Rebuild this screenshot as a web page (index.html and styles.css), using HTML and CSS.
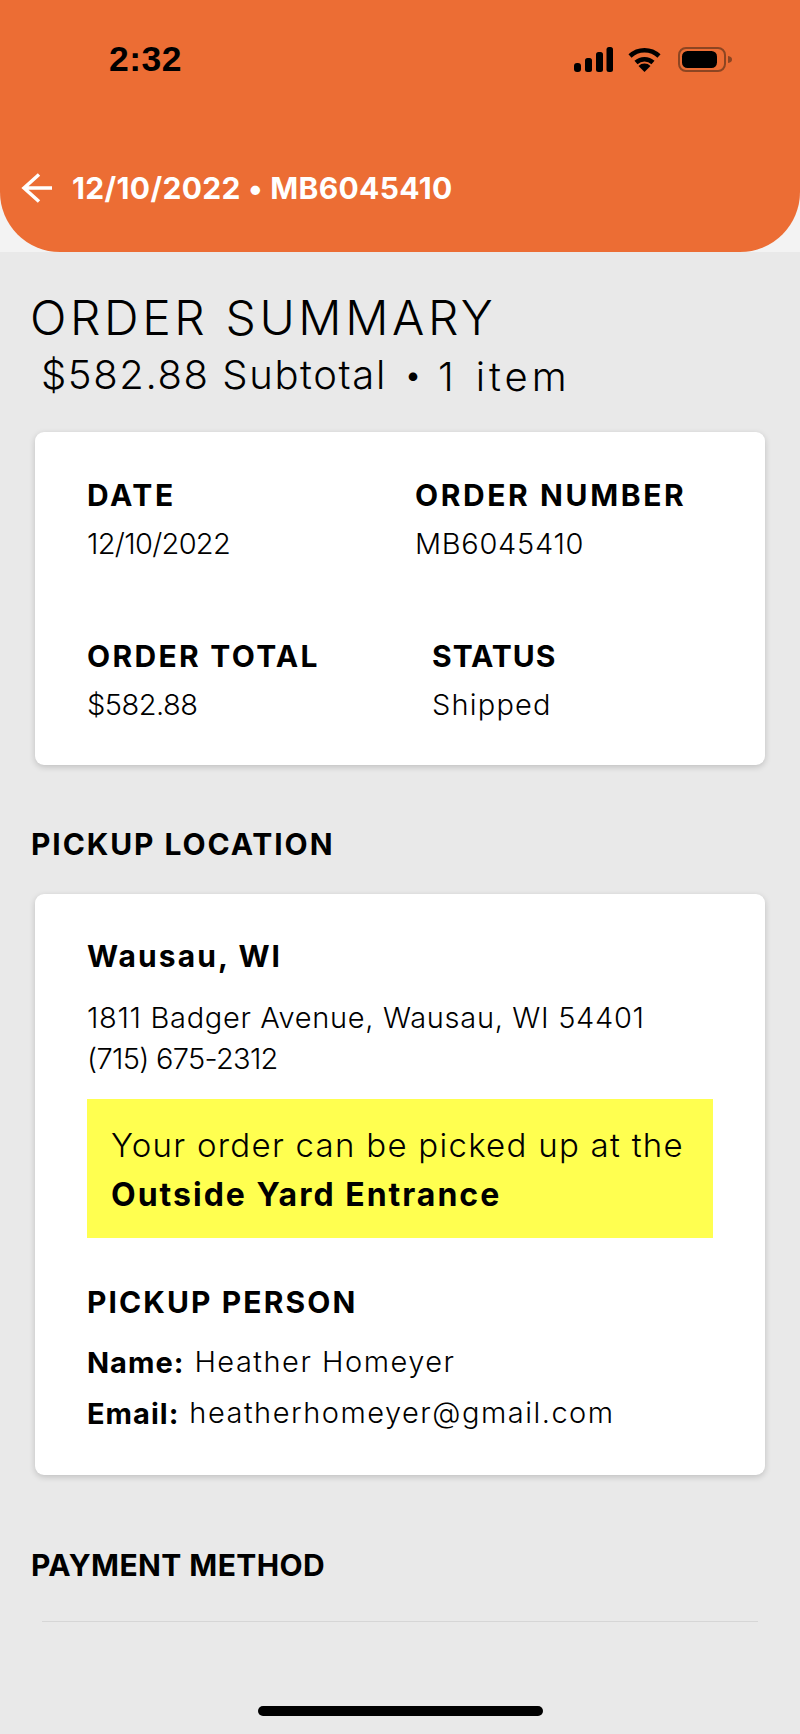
FILE: index.html
```html
<!DOCTYPE html>
<html lang="en">
<head>
<meta charset="utf-8">
<title>Order Summary</title>
<link rel="stylesheet" href="styles.css">
</head>
<body>
<header class="header">
  <div class="status">
    <span class="time">2:32</span>
    <div class="status-icons">
      <svg class="signal" width="40" height="25" viewBox="0 0 40 25" aria-hidden="true">
        <rect x="1" y="16" width="7" height="9" rx="3"/>
        <rect x="12" y="11" width="7" height="14" rx="2.5"/>
        <rect x="23" y="5" width="7" height="20" rx="2.5"/>
        <rect x="33.500" y="0" width="6.500" height="25" rx="2.500"/>
      </svg>
      <svg class="wifi" width="33" height="25" viewBox="0 0 33 25" aria-hidden="true">
        <path class="wave" d="M2 9 A21 21 0 0 1 31 9"/>
        <path class="wave" d="M8 15.500 A12.500 12.500 0 0 1 25 15.500"/>
        <path d="M16.500 25 L10.500 19 A8.500 8.500 0 0 1 22.500 19 Z"/>
      </svg>
      <svg class="battery" width="55" height="25" viewBox="0 0 55 25" aria-hidden="true">
        <rect class="shell" x="1" y="1" width="46" height="23" rx="7"/>
        <rect x="4" y="4" width="35" height="17" rx="5.500"/>
        <path class="nub" d="M50 9 C53 9.500 54 10.500 54 12.500 C54 14.500 53 15.500 50 16 Z"/>
      </svg>
    </div>
  </div>
  <nav class="nav">
    <svg class="back" width="32" height="30" viewBox="0 0 32 30" aria-hidden="true">
      <path d="M31 15 H3 M18 1.500 L3 15 L18 28.500"/>
    </svg>
    <span class="nav-title">12/10/2022 • MB6045410</span>
  </nav>
</header>

<main class="main">
  <h1 class="page-title">ORDER SUMMARY</h1>
  <p class="subtitle"><span class="sub-total">$582.88 Subtotal</span><span class="sub-dot">•</span><span class="sub-count">1</span><span class="sub-item">item</span></p>

  <section class="card summary">
    <div class="row">
      <div class="first">
        <h3 class="label ls-date">DATE</h3>
        <p class="value ls-date-value">12/10/2022</p>
      </div>
      <div>
        <h3 class="label ls-number">ORDER NUMBER</h3>
        <p class="value ls-number-value">MB6045410</p>
      </div>
    </div>
    <div class="row row-bottom">
      <div class="second">
        <h3 class="label ls-total">ORDER TOTAL</h3>
        <p class="value ls-total-value">$582.88</p>
      </div>
      <div>
        <h3 class="label ls-status">STATUS</h3>
        <p class="value ls-status-value">Shipped</p>
      </div>
    </div>
  </section>

  <h2 class="section-title pickup-title">PICKUP LOCATION</h2>

  <section class="card pickup">
    <h3 class="city">Wausau, WI</h3>
    <p class="address"><span class="street">1811 Badger Avenue, Wausau, WI 54401</span><br><span class="phone">(715) 675-2312</span></p>
    <div class="notice">
      <p class="notice-line">Your order can be picked up at the</p>
      <p class="notice-strong">Outside Yard Entrance</p>
    </div>
    <h3 class="label person-title">PICKUP PERSON</h3>
    <p class="person person-name"><b class="key">Name:</b><span class="value-inline">Heather Homeyer</span></p>
    <p class="person person-email"><b class="key">Email:</b><span class="value-inline">heatherhomeyer@gmail.com</span></p>
  </section>

  <h2 class="section-title payment-title">PAYMENT METHOD</h2>
  <hr class="divider">
  <div class="home-bar"></div>
</main>
</body>
</html>
```
FILE: styles.css
```css
* { box-sizing: border-box; margin: 0; padding: 0; }

html, body { height: 1734px; overflow: hidden; }

body {
  width: 800px;
  font-family: Inter, "Open Sans", sans-serif;
  color: #000;
  background: linear-gradient(#f3f3f3 0, #f3f3f3 252px, #e9e9e9 252px);
}

.header {
  height: 252px;
  padding-top: 47px;
  background: #ec6d34;
  border-radius: 0 0 60px 60px;
}

.status {
  display: flex;
  justify-content: space-between;
  align-items: center;
  height: 25px;
  padding: 0 67px 0 109px;
}

.time {
  font-family: "Liberation Sans", Arial, sans-serif;
  font-weight: 700;
  font-size: 35.500px;
  line-height: 25px;
  letter-spacing: 0.5px;
}

.status-icons { display: flex; align-items: center; gap: 15px; }
.battery { margin-left: 2px; }
.wave { fill: none; stroke: #000; stroke-width: 4.5; }
.shell { fill: none; stroke: #8c4522; stroke-width: 2; }
.nub { fill: #8c4522; }

.nav {
  display: flex;
  align-items: center;
  gap: 19px;
  height: 36px;
  margin-top: 98px;
  padding-left: 21px;
}

.back { fill: none; stroke: #fff; stroke-width: 3.5; }

.nav-title {
  color: #fff;
  font-weight: 700;
  font-size: 30px;
  line-height: 36px;
  letter-spacing: 0.35px;
}

.main { padding: 38px 0 0; }

.page-title {
  margin-left: 30px;
  font-weight: 300;
  font-size: 48px;
  line-height: 56px;
  letter-spacing: 3.6px;
}

.subtitle {
  display: flex;
  align-items: flex-start;
  height: 50px;
  margin: 4px 0 32px 41px;
  font-weight: 300;
  font-size: 40px;
  line-height: 50px;
}

.sub-total { letter-spacing: 1.6px; }
.sub-dot { margin-left: 17px; font-size: 32px; }
.sub-count { margin: 2px 0 0 16px; }
.sub-item { margin: 2px 0 0 22px; letter-spacing: 4px; }

.card {
  margin: 0 35px;
  background: #fff;
  border-radius: 9px;
  box-shadow: 0 2px 6px rgba(0, 0, 0, 0.18);
}

.summary { height: 333px; padding: 45px 52px 0; }

.row { display: flex; }
.row-bottom { margin-top: 76px; }
.first { width: 328px; }
.second { width: 345px; }

.label {
  font-weight: 700;
  font-size: 30px;
  line-height: 36px;
  letter-spacing: 2.5px;
}

.ls-date { letter-spacing: 2.6px; }
.ls-number { letter-spacing: 2.6px; }
.ls-total { letter-spacing: 2.3px; }
.ls-status { letter-spacing: 1px; }

.value {
  margin-top: 13px;
  font-weight: 300;
  font-size: 29px;
  line-height: 36px;
}

.ls-date-value { letter-spacing: -0.7px; }
.ls-number-value { letter-spacing: 0.7px; }
.ls-total-value { letter-spacing: -0.5px; }
.ls-status-value { letter-spacing: 1.2px; }

.section-title {
  font-weight: 700;
  font-size: 30px;
  line-height: 36px;
  margin-left: 31px;
}

.pickup-title { margin-top: 61px; margin-bottom: 32px; letter-spacing: 1.9px; }

.pickup { height: 581px; padding: 44px 52px 0; }

.city { font-weight: 700; font-size: 30px; line-height: 36px; letter-spacing: 2.1px; }

.address {
  margin-top: 23px;
  font-weight: 300;
  font-size: 29px;
  line-height: 41px;
}

.street { letter-spacing: 0.68px; }
.phone { letter-spacing: -0.7px; }

.notice {
  height: 139px;
  margin-top: 20px;
  padding: 22px 0 0 24px;
  background: #ffff50;
}

.notice-line { font-weight: 300; font-size: 33px; line-height: 49px; letter-spacing: 1.27px; }
.notice-strong { font-weight: 700; font-size: 32px; line-height: 49px; letter-spacing: 2px; }

.person-title { margin-top: 46px; letter-spacing: 2.1px; }

.person { display: flex; align-items: flex-start; font-size: 29px; line-height: 36px; }
.person-name { margin-top: 25px; }
.person-email { margin-top: 15px; }
.key { font-weight: 700; letter-spacing: 1px; }
.value-inline { margin-left: 10px; font-weight: 300; line-height: 33px; letter-spacing: 1.5px; }

.payment-title { margin-top: 72px; letter-spacing: 0.4px; }

.divider {
  margin: 38px 42px 0;
  border: 0;
  border-top: 1px solid #d6d6d6;
}

.home-bar {
  width: 285px;
  height: 10px;
  margin: 84px auto 0;
  background: #000;
  border-radius: 5px;
}
```
